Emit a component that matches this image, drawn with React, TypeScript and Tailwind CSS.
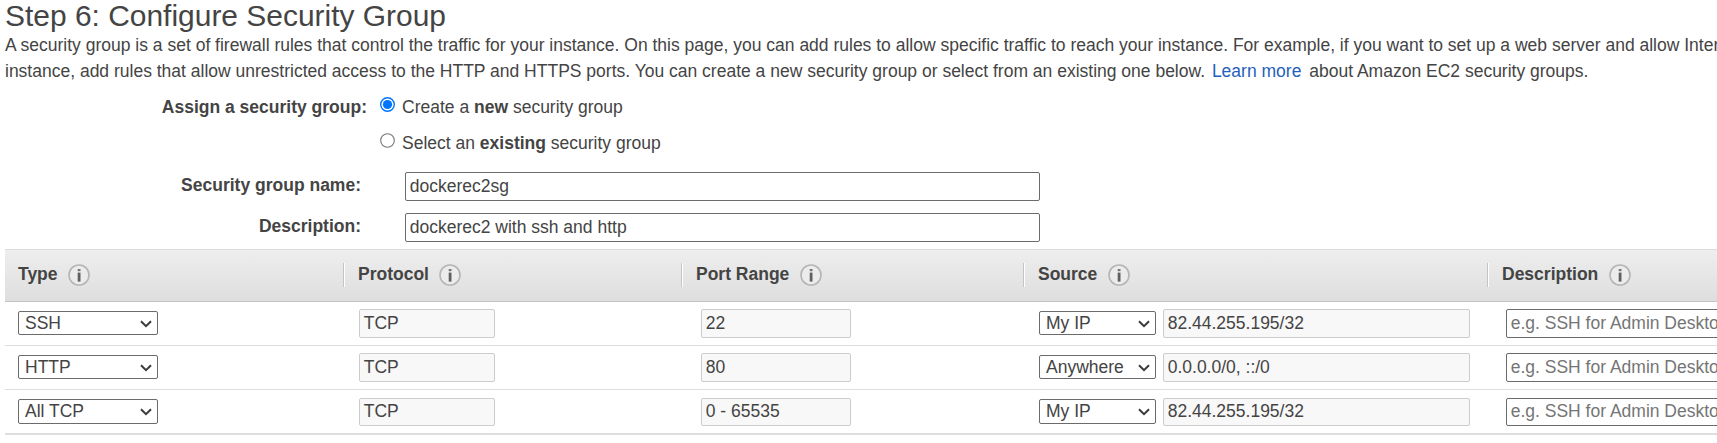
import type { ReactNode } from "react";

const rules = [
  { type: "SSH", port: "22", source: "My IP", cidr: "82.44.255.195/32" },
  { type: "HTTP", port: "80", source: "Anywhere", cidr: "0.0.0.0/0, ::/0" },
  { type: "All TCP", port: "0 - 65535", source: "My IP", cidr: "82.44.255.195/32" },
];

function InfoIcon() {
  return (
    <svg className="mt-[14px] h-[22px] w-[22px] shrink-0" viewBox="0 0 22 22" fill="none">
      <circle cx="11" cy="11" r="10" fill="#ececec" stroke="#b5b5b5" strokeWidth="1.6" />
      <rect x="9.7" y="5" width="2.8" height="2.2" fill="#777" />
      <rect x="9.7" y="8.6" width="2.8" height="9" fill="#606060" />
    </svg>
  );
}

function Heading({ title, className, divided = true }: { title: string; className: string; divided?: boolean }) {
  return (
    <div className={`flex shrink-0 items-start ${className}`}>
      {divided && <div className="mt-[13px] mr-[13px] h-6 w-[2px] shrink-0 border-l border-[#c4c4c4] bg-white" />}
      <span className="mr-[10.5px] pt-3 leading-6 font-bold whitespace-nowrap">{title}</span>
      <InfoIcon />
    </div>
  );
}

function Select({ value, className }: { value: string; className: string }) {
  return (
    <div className={`flex shrink-0 items-start justify-between rounded-[2px] border border-[#6b6b6b] bg-white pr-[5px] pl-[6px] ${className}`}>
      <span className="leading-[22px]">{value}</span>
      <svg className="mt-[6px] h-3 w-3" viewBox="0 0 12 12" fill="none">
        <path d="M1 3.2 6 8.2 11 3.2" stroke="#3a3a3a" strokeWidth="2" />
      </svg>
    </div>
  );
}

function Field({ children, className }: { children: ReactNode; className: string }) {
  return (
    <div className={`flex shrink-0 items-start overflow-hidden rounded-[2px] border pl-[3.7px] whitespace-nowrap ${className}`}>
      {children}
    </div>
  );
}

function Radio({ checked = false }: { checked?: boolean }) {
  return (
    <svg className="mr-[7px] h-[15px] w-[15px] shrink-0" viewBox="0 0 15 15">
      <circle cx="7.5" cy="7.5" r="6.8" fill="#fff" stroke={checked ? "#0075ff" : "#767676"} strokeWidth={checked ? 1.4 : 1.1} />
      {checked && <circle cx="7.5" cy="7.5" r="4.6" fill="#0075ff" />}
    </svg>
  );
}

export default function App() {
  return (
    <main className="h-[443px] w-[1717px] overflow-hidden bg-white pl-[5px] font-['Liberation_Sans',Arial,sans-serif] text-[17.5px] text-[#444]">
      <h1 className="h-8 text-[29.95px] leading-8 whitespace-nowrap">Step 6: Configure Security Group</h1>
      <div className="h-[58px] leading-[26px] whitespace-nowrap">
        <p>
          A security group is a set of firewall rules that control the traffic for your instance. On this page, you can add
          rules to allow specific traffic to reach your instance. For example, if you want to set up a web server and allow
          Internet
        </p>
        <p>
          instance, add rules that allow unrestricted access to the HTTP and HTTPS ports. You can create a new security group
          or select from an existing one below. <a className="mr-[3px] ml-[2px] text-[#1f5fbf]">Learn more</a> about Amazon EC2
          security groups.
        </p>
      </div>

      <div className="flex h-[82px] leading-6">
        <div className="w-[362px] pt-[5px] text-right font-bold">Assign a security group:</div>
        <div className="ml-[13px] pt-[5px]">
          <div className="flex h-9 items-start">
            <div className="pt-[2px]"><Radio checked /></div>
            <span>Create a <b>new</b> security group</span>
          </div>
          <div className="flex h-9 items-start">
            <div className="pt-[2px]"><Radio /></div>
            <span>Select an <b>existing</b> security group</span>
          </div>
        </div>
      </div>
      <div className="flex h-[41px]">
        <div className="w-[356px] pt-px text-right leading-6 font-bold">Security group name:</div>
        <Field className="ml-11 h-[29px] w-[635px] border-[#6b6b6b] leading-[27px]">dockerec2sg</Field>
      </div>
      <div className="flex h-9">
        <div className="w-[356px] pt-px text-right leading-6 font-bold">Description:</div>
        <Field className="ml-11 h-[29px] w-[635px] border-[#6b6b6b] leading-[27px]">dockerec2 with ssh and http</Field>
      </div>

      <section className="w-[1712px] border-b-2 border-[#dedede]">
        <div className="flex h-[53px] border-t border-b border-t-[#ddd] border-b-[#c4c4c4] bg-linear-to-b from-[#eeeeee] to-[#dedede]">
          <Heading title="Type" divided={false} className="w-[338px] pl-[13px]" />
          <Heading title="Protocol" className="w-[338px]" />
          <Heading title="Port Range" className="w-[342px]" />
          <Heading title="Source" className="w-[464px]" />
          <Heading title="Description" className="w-[225px]" />
        </div>
        {rules.map((rule, i) => (
          <div key={rule.type} className={`flex items-start ${i < 2 ? "h-11 border-b border-[#dedede] pt-[7px]" : "h-[43px] pt-2"}`}>
            <Select value={rule.type} className={`ml-[13px] w-[140px] ${i < 2 ? "mt-[2px] h-6" : "mt-px h-[25px]"}`} />
            <Field className={`ml-[201px] w-[136px] border-[#ccc] bg-[#f8f8f8] ${i < 2 ? "h-[29px] leading-[27px]" : "h-7 leading-6"}`}>TCP</Field>
            <Field className={`ml-[206px] w-[150px] border-[#ccc] bg-[#f8f8f8] ${i < 2 ? "h-[29px] leading-[27px]" : "h-7 leading-6"}`}>{rule.port}</Field>
            <Select value={rule.source} className={`ml-[188px] w-[117px] ${i < 2 ? "mt-[2px] h-6" : "mt-px h-[25px]"}`} />
            <Field className={`ml-[7px] w-[307px] border-[#ccc] bg-[#f8f8f8] ${i < 2 ? "h-[29px] leading-[27px]" : "h-7 leading-6"}`}>{rule.cidr}</Field>
            <Field className={`ml-9 w-[230px] border-[#6b6b6b] text-[#757575] ${i < 2 ? "h-[29px] leading-[27px]" : "h-7 leading-6"}`}>
              e.g. SSH for Admin Desktop
            </Field>
          </div>
        ))}
      </section>
    </main>
  );
}
